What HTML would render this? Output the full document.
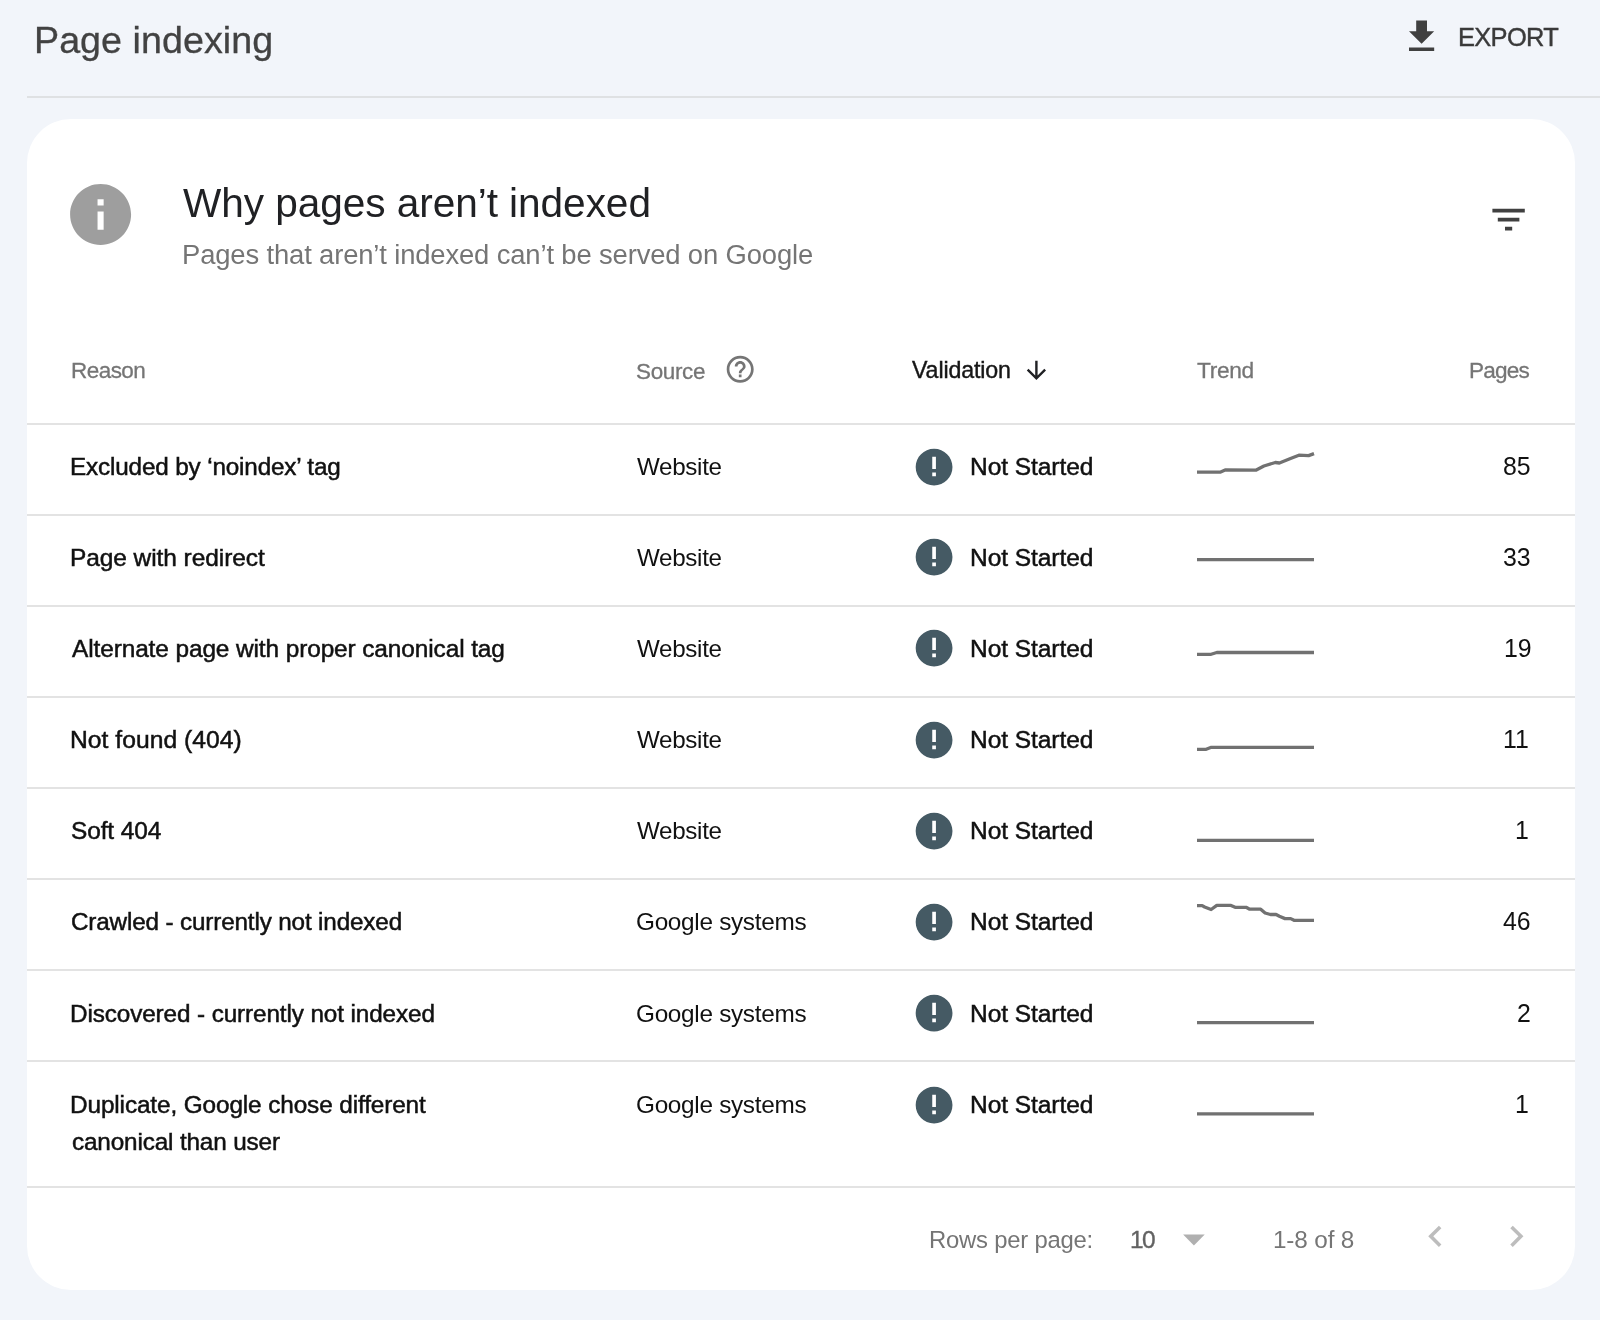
<!DOCTYPE html>
<html><head><meta charset="utf-8">
<style>
*{margin:0;padding:0;box-sizing:border-box}
html,body{width:1600px;height:1320px;overflow:hidden;background:#f2f5fa;font-family:"Liberation Sans",sans-serif}
.a{position:absolute;line-height:1;white-space:nowrap;will-change:transform}
.hl{position:absolute;left:27px;right:0;top:96px;height:2px;background:#dfe1e3}
.card{position:absolute;left:27px;top:119px;width:1548px;height:1171px;background:#fff;border-radius:44px}
.dv{position:absolute;left:27px;width:1548px;height:2px;background:#e3e3e3}
.sp{position:absolute;left:1197px;width:117px;height:3.6px;background:#757575}
svg{position:absolute;overflow:visible}
</style></head><body>
<div class="hl"></div>
<div class="card"></div>

<div class="a" style="left:33.60px;top:22px;font-size:37.65px;color:#424242;-webkit-text-stroke:0.3px #424242;letter-spacing:0.042px">Page indexing</div>
<div class="a" style="left:1457.90px;top:25px;font-size:25.46px;color:#3a3a3a;-webkit-text-stroke:0.4px #3a3a3a;letter-spacing:-0.68px">EXPORT</div>
<div class="a" style="left:183.25px;top:183px;font-size:40.58px;color:#202124;letter-spacing:-0.054px">Why pages aren’t indexed</div>
<div class="a" style="left:181.70px;top:241px;font-size:27.41px;color:#757575;letter-spacing:-0.144px">Pages that aren’t indexed can’t be served on Google</div>
<div class="a" style="left:71.10px;top:360px;font-size:22.5px;color:#757575;-webkit-text-stroke:0.3px #757575;letter-spacing:-0.54px">Reason</div>
<div class="a" style="left:636.20px;top:361px;font-size:22.45px;color:#757575;-webkit-text-stroke:0.3px #757575;letter-spacing:-0.32px">Source</div>
<div class="a" style="left:912.00px;top:359px;font-size:23.22px;color:#161616;-webkit-text-stroke:0.4px #161616;letter-spacing:-0.144px">Validation</div>
<div class="a" style="left:1197.20px;top:359px;font-size:22.73px;color:#757575;-webkit-text-stroke:0.3px #757575;letter-spacing:-0.35px">Trend</div>
<div class="a" style="left:1469.00px;top:360px;font-size:22.59px;color:#757575;-webkit-text-stroke:0.3px #757575;letter-spacing:-0.825px">Pages</div>
<div class="a" style="left:70.20px;top:455px;font-size:24.26px;color:#111111;-webkit-text-stroke:0.5px #111111;letter-spacing:-0.142px">Excluded by ‘noindex’ tag</div>
<div class="a" style="left:637.10px;top:455px;font-size:24.17px;color:#111111;letter-spacing:-0.308px">Website</div>
<div class="a" style="left:969.70px;top:455px;font-size:24.52px;color:#111111;-webkit-text-stroke:0.5px #111111;letter-spacing:-0.06px">Not Started</div>
<div class="a" style="left:1502.90px;top:455px;font-size:24.85px;color:#111111;letter-spacing:0px">85</div>
<div class="a" style="left:70.20px;top:546px;font-size:24.47px;color:#111111;-webkit-text-stroke:0.5px #111111;letter-spacing:-0.065px">Page with redirect</div>
<div class="a" style="left:637.10px;top:546px;font-size:24.17px;color:#111111;letter-spacing:-0.308px">Website</div>
<div class="a" style="left:969.70px;top:546px;font-size:24.52px;color:#111111;-webkit-text-stroke:0.5px #111111;letter-spacing:-0.06px">Not Started</div>
<div class="a" style="left:1502.50px;top:546px;font-size:24.85px;color:#111111;letter-spacing:0px">33</div>
<div class="a" style="left:72.20px;top:637px;font-size:24.41px;color:#111111;-webkit-text-stroke:0.5px #111111;letter-spacing:-0.103px">Alternate page with proper canonical tag</div>
<div class="a" style="left:637.10px;top:637px;font-size:24.17px;color:#111111;letter-spacing:-0.308px">Website</div>
<div class="a" style="left:969.70px;top:637px;font-size:24.52px;color:#111111;-webkit-text-stroke:0.5px #111111;letter-spacing:-0.06px">Not Started</div>
<div class="a" style="left:1503.50px;top:637px;font-size:24.85px;color:#111111;letter-spacing:0px">19</div>
<div class="a" style="left:70.20px;top:728px;font-size:24.66px;color:#111111;-webkit-text-stroke:0.5px #111111;letter-spacing:0.029px">Not found (404)</div>
<div class="a" style="left:637.10px;top:728px;font-size:24.17px;color:#111111;letter-spacing:-0.308px">Website</div>
<div class="a" style="left:969.70px;top:728px;font-size:24.52px;color:#111111;-webkit-text-stroke:0.5px #111111;letter-spacing:-0.06px">Not Started</div>
<div class="a" style="left:1503.00px;top:728px;font-size:24.85px;color:#111111;letter-spacing:0px">11</div>
<div class="a" style="left:71.20px;top:819px;font-size:24.43px;color:#111111;-webkit-text-stroke:0.5px #111111;letter-spacing:-0.1px">Soft 404</div>
<div class="a" style="left:637.10px;top:819px;font-size:24.17px;color:#111111;letter-spacing:-0.308px">Website</div>
<div class="a" style="left:969.70px;top:819px;font-size:24.52px;color:#111111;-webkit-text-stroke:0.5px #111111;letter-spacing:-0.06px">Not Started</div>
<div class="a" style="left:1515.00px;top:819px;font-size:24.85px;color:#111111;letter-spacing:0px">1</div>
<div class="a" style="left:71.20px;top:910px;font-size:24.25px;color:#111111;-webkit-text-stroke:0.5px #111111;letter-spacing:-0.15px">Crawled - currently not indexed</div>
<div class="a" style="left:636.10px;top:910px;font-size:24.33px;color:#111111;letter-spacing:-0.296px">Google systems</div>
<div class="a" style="left:969.70px;top:910px;font-size:24.52px;color:#111111;-webkit-text-stroke:0.5px #111111;letter-spacing:-0.06px">Not Started</div>
<div class="a" style="left:1502.50px;top:910px;font-size:24.85px;color:#111111;letter-spacing:0px">46</div>
<div class="a" style="left:70.20px;top:1002px;font-size:24.29px;color:#111111;-webkit-text-stroke:0.5px #111111;letter-spacing:-0.106px">Discovered - currently not indexed</div>
<div class="a" style="left:636.10px;top:1002px;font-size:24.33px;color:#111111;letter-spacing:-0.296px">Google systems</div>
<div class="a" style="left:969.70px;top:1002px;font-size:24.52px;color:#111111;-webkit-text-stroke:0.5px #111111;letter-spacing:-0.06px">Not Started</div>
<div class="a" style="left:1517.00px;top:1002px;font-size:24.85px;color:#111111;letter-spacing:0px">2</div>
<div class="a" style="left:70.20px;top:1093px;font-size:24.35px;color:#111111;-webkit-text-stroke:0.5px #111111;letter-spacing:-0.116px">Duplicate, Google chose different</div>
<div class="a" style="left:636.10px;top:1093px;font-size:24.33px;color:#111111;letter-spacing:-0.296px">Google systems</div>
<div class="a" style="left:969.70px;top:1093px;font-size:24.52px;color:#111111;-webkit-text-stroke:0.5px #111111;letter-spacing:-0.06px">Not Started</div>
<div class="a" style="left:1515.00px;top:1093px;font-size:24.85px;color:#111111;letter-spacing:0px">1</div>
<div class="a" style="left:71.70px;top:1130px;font-size:24.31px;color:#111111;-webkit-text-stroke:0.5px #111111;letter-spacing:-0.15px">canonical than user</div>
<div class="a" style="left:928.90px;top:1228px;font-size:23.86px;color:#757575;letter-spacing:-0.223px">Rows per page:</div>
<div class="a" style="left:1130.00px;top:1228px;font-size:24.49px;color:#626262;-webkit-text-stroke:0.35px #626262;letter-spacing:-1.6px">10</div>
<div class="a" style="left:1272.80px;top:1228px;font-size:24.29px;color:#757575;letter-spacing:-0.143px">1-8 of 8</div>
<svg style="left:1400.00px;top:15.05px" width="43.20" height="43.20" viewBox="0 0 24 24"><path fill="#404040" d="M19 9h-4V3H9v6H5l7 7 7-7zM5 18v2h14v-2H5z"/></svg>
<svg style="left:63.90px;top:178.00px" width="73.20" height="73.20" viewBox="0 0 24 24"><path fill="#9e9e9e" d="M12 2C6.48 2 2 6.48 2 12s4.48 10 10 10 10-4.48 10-10S17.52 2 12 2zm1 15h-2v-6h2v6zm0-8h-2V7h2v2z"/></svg>
<svg style="left:1486.85px;top:197.95px" width="43.20" height="43.20" viewBox="0 0 24 24"><path fill="#404040" d="M10 18h4v-2h-4v2zM3 6v2h18V6H3zm3 7h12v-2H6v2z"/></svg>
<svg style="left:724.00px;top:353.20px" width="32.40" height="32.40" viewBox="0 0 24 24"><path fill="#757575" d="M11 18h2v-2h-2v2zm1-16C6.48 2 2 6.48 2 12s4.48 10 10 10 10-4.48 10-10S17.52 2 12 2zm0 18c-4.41 0-8-3.59-8-8s3.59-8 8-8 8 3.59 8 8-3.59 8-8 8zm0-14c-2.21 0-4 1.79-4 4h2c0-1.1.9-2 2-2s2 .9 2 2c0 2-3 1.75-3 5h2c0-2.25 3-2.5 3-5 0-2.21-1.79-4-4-4z"/></svg>
<svg style="left:1022.20px;top:356.40px" width="28.80" height="28.80" viewBox="0 0 24 24"><path fill="#202124" d="M20 12l-1.41-1.41L13 16.17V4h-2v12.17l-5.58-5.59L4 12l8 8 8-8z"/></svg>
<div class="dv" style="top:422.6px"></div>
<svg style="left:0;top:0" width="1600" height="1320" viewBox="0 0 1600 1320"><polyline fill="none" stroke="#717171" stroke-width="3.3" stroke-linejoin="round" points="1197,472.2 1220.1,472.2 1225.7,469.8 1255.8,470.2 1263.9,466 1275.3,462.5 1279.4,463 1289.9,458.8 1298.9,455.2 1308.6,455.6 1314,453.6"/><polyline fill="none" stroke="#717171" stroke-width="3.3" stroke-linejoin="round" points="1197,559.6 1314,559.6"/><polyline fill="none" stroke="#717171" stroke-width="3.3" stroke-linejoin="round" points="1197,654.3 1211.1,654.3 1216.8,652.5 1314,652.5"/><polyline fill="none" stroke="#717171" stroke-width="3.3" stroke-linejoin="round" points="1197,749.3 1206.2,749.3 1211.3,747.3 1314,747.3"/><polyline fill="none" stroke="#717171" stroke-width="3.3" stroke-linejoin="round" points="1197,840.4 1314,840.4"/><polyline fill="none" stroke="#717171" stroke-width="3.3" stroke-linejoin="round" points="1197,905.6 1202.2,905.6 1204.6,907 1211.1,909.5 1216.8,905.4 1231,905.4 1235.1,907.3 1246.1,907.3 1249.7,909.2 1260.7,909.2 1265.1,913 1270.4,914.5 1276.1,914.5 1279.4,916.3 1285,918.6 1290.7,918.6 1294,920.3 1314,920.3"/><polyline fill="none" stroke="#717171" stroke-width="3.3" stroke-linejoin="round" points="1197,1022.6 1314,1022.6"/><polyline fill="none" stroke="#717171" stroke-width="3.3" stroke-linejoin="round" points="1197,1113.8 1314,1113.8"/></svg>
<svg style="left:911.72px;top:444.52px" width="44.16" height="44.16" viewBox="0 0 24 24"><path fill="#455a64" d="M12 2C6.48 2 2 6.48 2 12s4.48 10 10 10 10-4.48 10-10S17.52 2 12 2zm1 15h-2v-2h2v2zm0-4h-2V6.4h2v6.6z"/></svg>
<div class="dv" style="top:513.5px"></div>
<svg style="left:911.72px;top:535.42px" width="44.16" height="44.16" viewBox="0 0 24 24"><path fill="#455a64" d="M12 2C6.48 2 2 6.48 2 12s4.48 10 10 10 10-4.48 10-10S17.52 2 12 2zm1 15h-2v-2h2v2zm0-4h-2V6.4h2v6.6z"/></svg>
<div class="dv" style="top:604.5px"></div>
<svg style="left:911.72px;top:626.42px" width="44.16" height="44.16" viewBox="0 0 24 24"><path fill="#455a64" d="M12 2C6.48 2 2 6.48 2 12s4.48 10 10 10 10-4.48 10-10S17.52 2 12 2zm1 15h-2v-2h2v2zm0-4h-2V6.4h2v6.6z"/></svg>
<div class="dv" style="top:695.8px"></div>
<svg style="left:911.72px;top:717.72px" width="44.16" height="44.16" viewBox="0 0 24 24"><path fill="#455a64" d="M12 2C6.48 2 2 6.48 2 12s4.48 10 10 10 10-4.48 10-10S17.52 2 12 2zm1 15h-2v-2h2v2zm0-4h-2V6.4h2v6.6z"/></svg>
<div class="dv" style="top:786.8px"></div>
<svg style="left:911.72px;top:808.72px" width="44.16" height="44.16" viewBox="0 0 24 24"><path fill="#455a64" d="M12 2C6.48 2 2 6.48 2 12s4.48 10 10 10 10-4.48 10-10S17.52 2 12 2zm1 15h-2v-2h2v2zm0-4h-2V6.4h2v6.6z"/></svg>
<div class="dv" style="top:878.0px"></div>
<svg style="left:911.72px;top:899.92px" width="44.16" height="44.16" viewBox="0 0 24 24"><path fill="#455a64" d="M12 2C6.48 2 2 6.48 2 12s4.48 10 10 10 10-4.48 10-10S17.52 2 12 2zm1 15h-2v-2h2v2zm0-4h-2V6.4h2v6.6z"/></svg>
<div class="dv" style="top:969.1px"></div>
<svg style="left:911.72px;top:991.02px" width="44.16" height="44.16" viewBox="0 0 24 24"><path fill="#455a64" d="M12 2C6.48 2 2 6.48 2 12s4.48 10 10 10 10-4.48 10-10S17.52 2 12 2zm1 15h-2v-2h2v2zm0-4h-2V6.4h2v6.6z"/></svg>
<div class="dv" style="top:1060.0px"></div>
<svg style="left:911.72px;top:1082.67px" width="44.16" height="44.16" viewBox="0 0 24 24"><path fill="#455a64" d="M12 2C6.48 2 2 6.48 2 12s4.48 10 10 10 10-4.48 10-10S17.52 2 12 2zm1 15h-2v-2h2v2zm0-4h-2V6.4h2v6.6z"/></svg>
<div class="dv" style="top:1185.5px"></div>
<svg style="left:1168.00px;top:1212.60px" width="51.84" height="51.84" viewBox="0 0 24 24"><path fill="#b0b0b0" d="M7 10l5 5 5-5z"/></svg>
<svg style="left:1413.80px;top:1215.10px" width="42.70" height="42.70" viewBox="0 0 24 24"><path fill="#bdbdbd" d="M15.41 7.41L14 6l-6 6 6 6 1.41-1.41L10.83 12z"/></svg>
<svg style="left:1494.70px;top:1215.10px" width="42.70" height="42.70" viewBox="0 0 24 24"><path fill="#bdbdbd" d="M10 6L8.59 7.41 13.17 12l-4.58 4.59L10 18l6-6z"/></svg>
</body></html>
